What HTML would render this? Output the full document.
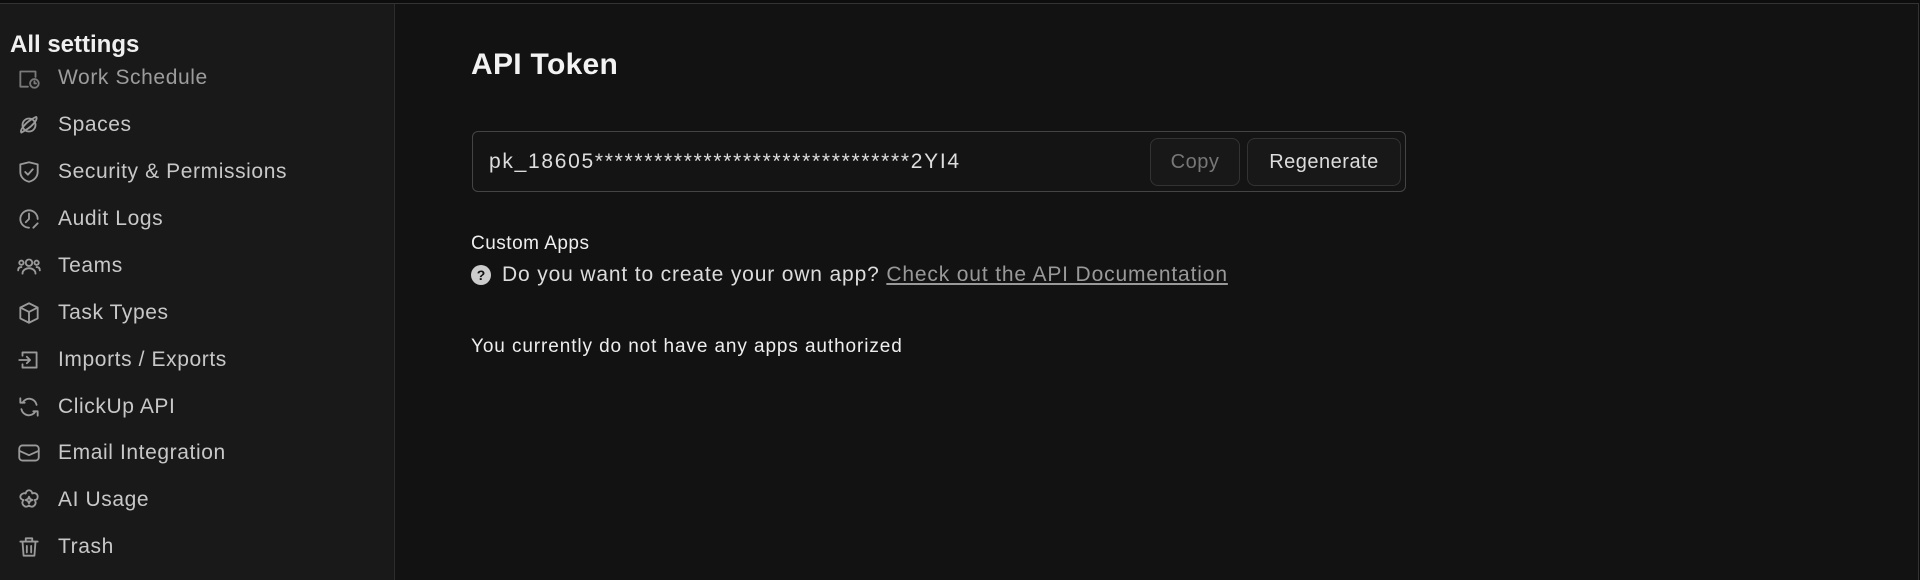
<!DOCTYPE html>
<html><head><meta charset="utf-8"><style>
*{margin:0;padding:0;box-sizing:border-box}
html,body{width:1920px;height:580px;overflow:hidden}
body{background:#0d0d0d;font-family:"Liberation Sans",sans-serif;position:relative}
.frame{position:absolute;left:0;top:3px;width:1919px;height:577px;border-top:1px solid #333;border-right:1px solid #333;background:#121212}
.side{position:absolute;left:0;top:4px;width:395px;height:576px;background:#191919;border-right:1px solid #2c2c2c}
.hdr{position:absolute;left:10px;top:27px;font-size:24px;font-weight:bold;color:#f0f0f0}
.item{position:absolute;left:0;height:30px;display:flex;align-items:center;color:#c8c8c8;font-size:21px;letter-spacing:.6px}
.item svg{position:absolute;left:16px;top:2px;width:26px;height:26px;stroke:#9a9a9a;fill:none;stroke-width:1.7;stroke-linecap:round;stroke-linejoin:round}
.item span{position:absolute;left:58px;white-space:nowrap}
h1{position:absolute;left:471px;top:48px;font-size:30px;font-weight:bold;color:#f2f2f2;letter-spacing:.3px}
.box{position:absolute;left:472px;top:131px;width:934px;height:61px;border:1px solid #444;border-radius:6px;background:#141414}
.tok{position:absolute;left:16px;top:18px;font-size:21px;color:#ddd;letter-spacing:1.7px}
.btn{position:absolute;top:6px;height:48px;border:1px solid #333;border-radius:8px;font-size:20px;display:flex;align-items:center;justify-content:center;background:#181818;letter-spacing:.5px}
.t{position:absolute;left:471px;font-size:19px;color:#eee;white-space:nowrap;letter-spacing:.5px}
</style></head><body>
<div class="frame"></div>
<div class="side">
<div class="item" style="top:59px;opacity:.75"><svg viewBox="0 0 24 24"><path d="M4 6v14h7M4 6h14v5"/><circle cx="17" cy="17" r="4"/><path d="M17 15v2h1.5"/></svg><span>Work Schedule</span></div>
<div class="hdr">All settings</div>
<div class="item" style="top:106px"><svg viewBox="0 0 24 24"><circle cx="12" cy="12" r="6"/><path d="M5 19c-2-2 4-9 9-12s5-3 5-1-4 7-9 10-5 3-5 3z"/></svg><span>Spaces</span></div>
<div class="item" style="top:153px"><svg viewBox="0 0 24 24"><path d="M4 5l8-2 8 2v7c0 5-4 8-8 9-4-1-8-4-8-9z"/><path d="M8.5 12l2.5 2.5 4.5-5"/></svg><span>Security &amp; Permissions</span></div>
<div class="item" style="top:200px"><svg viewBox="0 0 24 24"><path d="M20 12a8 8 0 1 0-8 8"/><path d="M12 7v5l-3 3M16 20l4-4"/></svg><span>Audit Logs</span></div>
<div class="item" style="top:247px"><svg viewBox="0 0 24 24"><circle cx="12" cy="9" r="3"/><path d="M6 19c0-3 3-5 6-5s6 2 6 5"/><circle cx="5" cy="9" r="2"/><circle cx="19" cy="9" r="2"/><path d="M2 16c0-2 1-3 3-3M22 16c0-2-1-3-3-3"/></svg><span>Teams</span></div>
<div class="item" style="top:294px"><svg viewBox="0 0 24 24"><path d="M12 3l8 4v10l-8 4-8-4V7z"/><path d="M4 7l8 4 8-4M12 11v10"/></svg><span>Task Types</span></div>
<div class="item" style="top:341px"><svg viewBox="0 0 24 24"><path d="M6 8V5h13v14H6v-3"/><path d="M3 12h10M10 9l3 3-3 3"/></svg><span>Imports / Exports</span></div>
<div class="item" style="top:388px"><svg viewBox="0 0 24 24"><path d="M19 10a7 7 0 0 0-13-2M5 14a7 7 0 0 0 13 2"/><path d="M4 4v4h4M20 20v-4h-4"/></svg><span>ClickUp API</span></div>
<div class="item" style="top:434px"><svg viewBox="0 0 24 24"><rect x="3" y="5" width="18" height="14" rx="3"/><path d="M3 10l9 4 9-4"/></svg><span>Email Integration</span></div>
<div class="item" style="top:481px"><svg viewBox="0 0 24 24"><path d="M12 3c2 0 3 2 3 3 2-1 5 0 5 3s-2 3-3 3c1 1 2 3 0 5s-4 1-5 0c-1 1-3 2-5 0s-1-4 0-5c-1 0-3-1-3-3s3-4 5-3c0-1 1-3 3-3z"/><path d="M12 9l1 2 2 1-2 1-1 2-1-2-2-1 2-1z"/></svg><span>AI Usage</span></div>
<div class="item" style="top:528px"><svg viewBox="0 0 24 24"><path d="M4 7h16M9 7V4h6v3M6 7l1 13h10l1-13M10 11v6M14 11v6"/></svg><span>Trash</span></div>
</div>
<h1>API Token</h1>
<div class="box">
<div class="tok">pk_18605********************************2YI4</div>
<div class="btn" style="left:677px;width:90px;color:#777">Copy</div>
<div class="btn" style="left:774px;width:154px;color:#ddd">Regenerate</div>
</div>
<div class="t" style="top:233px">Custom Apps</div>
<div class="t" style="top:263px;display:flex;align-items:center;font-size:21px;color:#ddd;letter-spacing:.85px"><span style="display:inline-block;width:20px;height:20px;border-radius:50%;background:#ccc;color:#111;font-size:14px;font-weight:bold;text-align:center;line-height:20px;margin-right:11px;letter-spacing:0">?</span>Do you want to create your own app?&nbsp;<span style="color:#999;text-decoration:underline">Check out the API Documentation</span></div>
<div class="t" style="top:336px;letter-spacing:.9px">You currently do not have any apps authorized</div>
</body></html>
